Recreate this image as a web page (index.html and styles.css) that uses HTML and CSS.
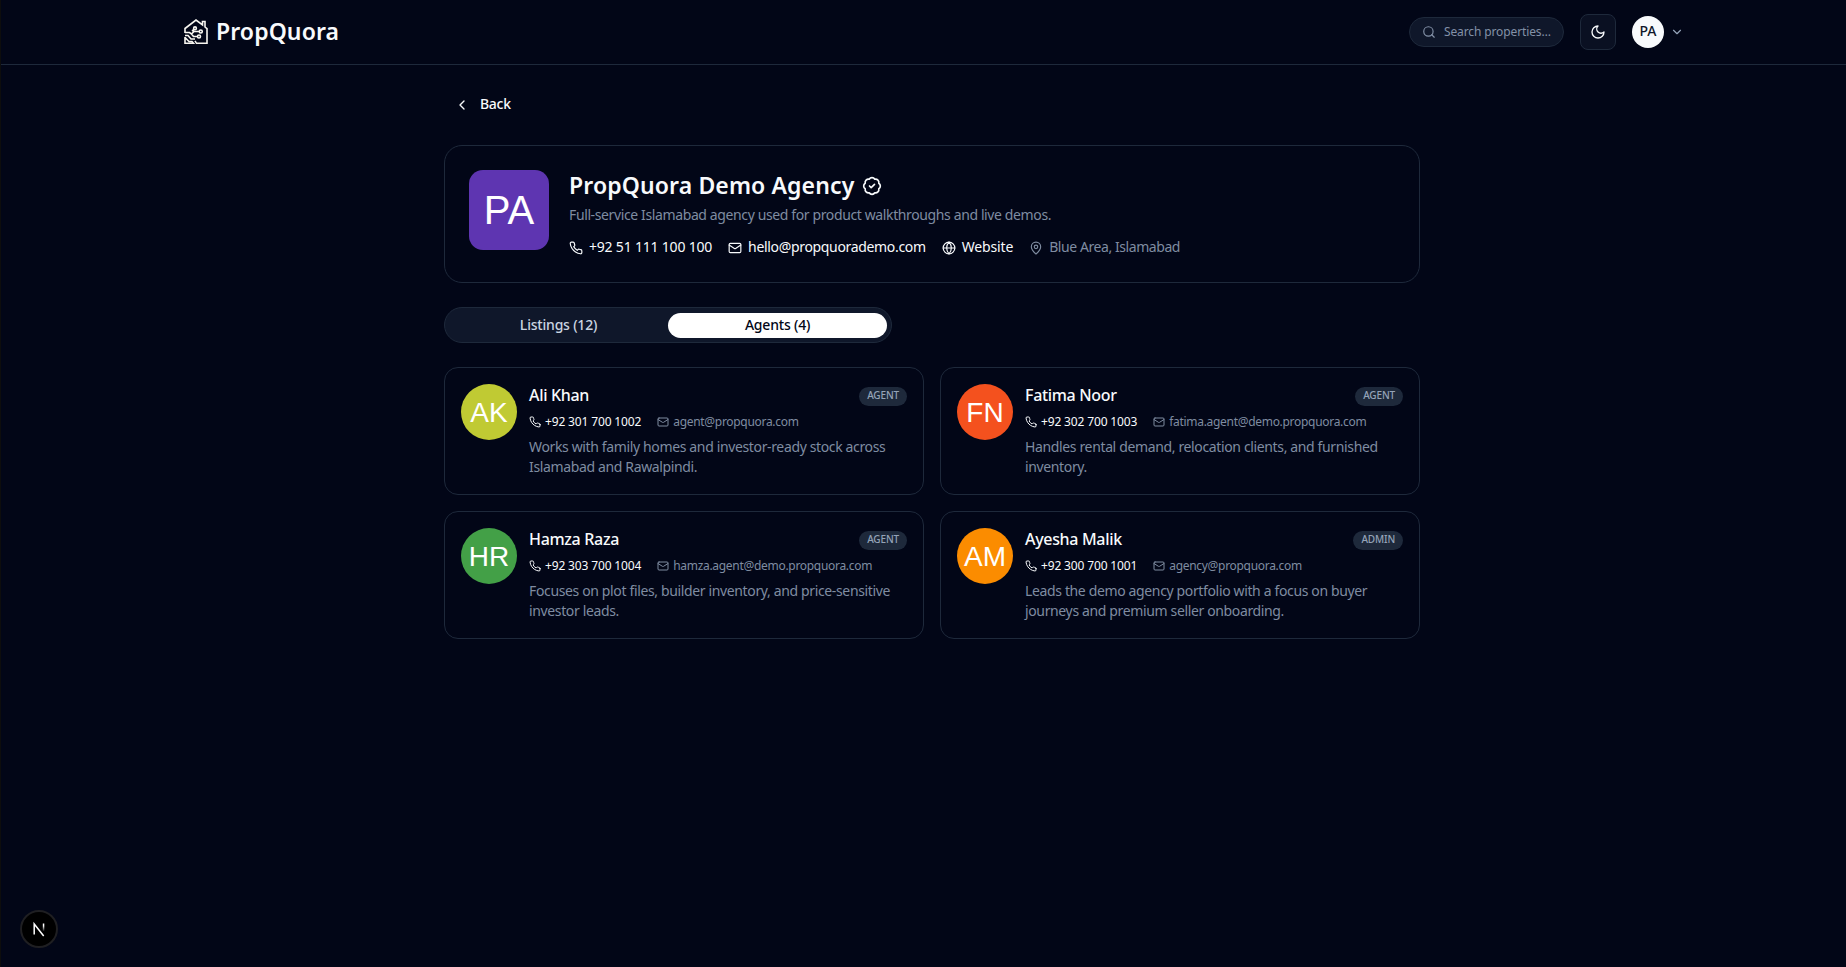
FILE: index.html
```html
<!DOCTYPE html>
<html lang="en">
<head>
    <meta charset="UTF-8">
    <meta name="viewport" content="width=device-width, initial-scale=1.0">
    <title>PropQuora Demo Agency</title>
    <link rel="stylesheet" href="styles.css">
</head>
<body>
    <!-- Icon set -->
    <svg class="sprite">
        <symbol id="phone" viewBox="0 0 24 24"><path d="M22 16.92v3a2 2 0 0 1-2.18 2 19.79 19.79 0 0 1-8.63-3.07 19.5 19.5 0 0 1-6-6 19.79 19.79 0 0 1-3.07-8.67A2 2 0 0 1 4.11 2h3a2 2 0 0 1 2 1.72 12.84 12.84 0 0 0 .7 2.81 2 2 0 0 1-.45 2.11L8.09 9.91a16 16 0 0 0 6 6l1.27-1.27a2 2 0 0 1 2.11-.45 12.84 12.84 0 0 0 2.81.7A2 2 0 0 1 22 16.92z"/></symbol>
        <symbol id="mail" viewBox="0 0 24 24"><rect x="2" y="4" width="20" height="16" rx="2"/><path d="m22 7-8.97 5.7a1.94 1.94 0 0 1-2.06 0L2 7"/></symbol>
        <symbol id="globe" viewBox="0 0 24 24"><circle cx="12" cy="12" r="10"/><path d="M12 2a14.5 14.5 0 0 0 0 20 14.5 14.5 0 0 0 0-20M2 12h20"/></symbol>
        <symbol id="pin" viewBox="0 0 24 24"><path d="M20 10c0 4.993-5.539 10.193-7.399 11.799a1 1 0 0 1-1.202 0C9.539 20.193 4 14.993 4 10a8 8 0 0 1 16 0"/><circle cx="12" cy="10" r="3"/></symbol>
    </svg>

    <header class="header">
        <div class="header-inner">
            <a class="logo">
                <svg class="logo-icon" viewBox="0 0 24 26">
                    <path d="M1 14V9.500L12 1l6.500 5V2.500h2.500V8l2 1.700V24.300H12.500l-1.500-2.500"/>
                    <path d="M1 13.500h4.500l2 1.500 2.500-2.500h5M7.500 15l2 2.500h4M1 16.500h3l3 3.500h4M1 18v6.300h8.500L8 22.500H5L1 18.500M8 12l2-1.500"/>
                    <circle cx="11" cy="9.300" r="1.400"/>
                    <circle cx="16.800" cy="12.500" r="1.500"/>
                    <circle cx="15" cy="17.500" r="1.500"/>
                </svg>
                <span class="logo-text">PropQuora</span>
            </a>
            <div class="header-actions">
                <div class="search">
                    <svg class="icon" viewBox="0 0 24 24"><circle cx="11" cy="11" r="8"/><path d="m21 21-4.300-4.300"/></svg>
                    <span>Search properties…</span>
                </div>
                <button class="theme-btn">
                    <svg class="icon" viewBox="0 0 24 24"><path d="M12 3a6 6 0 0 0 9 9 9 9 0 1 1-9-9Z"/></svg>
                </button>
                <div class="user">
                    <span class="user-avatar">PA</span>
                    <svg class="icon" viewBox="0 0 24 24"><path d="m6 9 6 6 6-6"/></svg>
                </div>
            </div>
        </div>
    </header>

    <main class="container">
        <a class="back">
            <svg class="icon" viewBox="0 0 24 24"><path d="m15 18-6-6 6-6"/></svg>
            <span>Back</span>
        </a>

        <section class="agency">
            <div class="agency-logo">PA</div>
            <div class="agency-info">
                <h1><span>PropQuora Demo Agency</span>
                    <svg class="icon" viewBox="0 0 24 24"><path d="M3.850 8.620a4 4 0 0 1 4.780-4.770 4 4 0 0 1 6.740 0 4 4 0 0 1 4.780 4.780 4 4 0 0 1 0 6.740 4 4 0 0 1-4.770 4.780 4 4 0 0 1-6.750 0 4 4 0 0 1-4.780-4.770 4 4 0 0 1 0-6.760Z"/><path d="m9 12 2 2 4-4"/></svg>
                </h1>
                <p class="agency-desc">Full-service Islamabad agency used for product walkthroughs and live demos.</p>
                <div class="agency-contact">
                    <a class="tel"><svg class="icon"><use href="#phone"/></svg><span>+92 51 111 100 100</span></a>
                    <a class="email"><svg class="icon"><use href="#mail"/></svg><span>hello@propquorademo.com</span></a>
                    <a class="site"><svg class="icon"><use href="#globe"/></svg><span>Website</span></a>
                    <span class="place"><svg class="icon"><use href="#pin"/></svg><span>Blue Area, Islamabad</span></span>
                </div>
            </div>
        </section>

        <div class="tabs">
            <button class="tab">Listings (12)</button>
            <button class="tab active">Agents (4)</button>
        </div>

        <div class="agents">
            <article class="agent">
                <div class="avatar lime">AK</div>
                <div class="agent-info">
                    <div class="agent-top"><h2>Ali Khan</h2><span class="badge">AGENT</span></div>
                    <div class="agent-contact">
                        <a class="tel"><svg class="icon"><use href="#phone"/></svg><span>+92 301 700 1002</span></a>
                        <a class="email"><svg class="icon"><use href="#mail"/></svg><span>agent@propquora.com</span></a>
                    </div>
                    <p>Works with family homes and investor-ready stock across<br>Islamabad and Rawalpindi.</p>
                </div>
            </article>
            <article class="agent">
                <div class="avatar red">FN</div>
                <div class="agent-info">
                    <div class="agent-top"><h2>Fatima Noor</h2><span class="badge">AGENT</span></div>
                    <div class="agent-contact">
                        <a class="tel"><svg class="icon"><use href="#phone"/></svg><span>+92 302 700 1003</span></a>
                        <a class="email"><svg class="icon"><use href="#mail"/></svg><span>fatima.agent@demo.propquora.com</span></a>
                    </div>
                    <p>Handles rental demand, relocation clients, and furnished<br>inventory.</p>
                </div>
            </article>
            <article class="agent">
                <div class="avatar green">HR</div>
                <div class="agent-info">
                    <div class="agent-top"><h2>Hamza Raza</h2><span class="badge">AGENT</span></div>
                    <div class="agent-contact">
                        <a class="tel"><svg class="icon"><use href="#phone"/></svg><span>+92 303 700 1004</span></a>
                        <a class="email"><svg class="icon"><use href="#mail"/></svg><span>hamza.agent@demo.propquora.com</span></a>
                    </div>
                    <p>Focuses on plot files, builder inventory, and price-sensitive<br>investor leads.</p>
                </div>
            </article>
            <article class="agent">
                <div class="avatar orange">AM</div>
                <div class="agent-info">
                    <div class="agent-top"><h2>Ayesha Malik</h2><span class="badge">ADMIN</span></div>
                    <div class="agent-contact">
                        <a class="tel"><svg class="icon"><use href="#phone"/></svg><span>+92 300 700 1001</span></a>
                        <a class="email"><svg class="icon"><use href="#mail"/></svg><span>agency@propquora.com</span></a>
                    </div>
                    <p>Leads the demo agency portfolio with a focus on buyer<br>journeys and premium seller onboarding.</p>
                </div>
            </article>
        </div>
    </main>

    <!-- Dev tools button -->
    <div class="dev-badge">
        <svg viewBox="0 0 16 16">
            <defs>
                <linearGradient id="fade" x1="0" y1="0" x2="0" y2="1"><stop offset="0.300" stop-color="#fff"/><stop offset="1" stop-color="#fff" stop-opacity="0"/></linearGradient>
            </defs>
            <path d="M3.200 13.500V3l9.500 12" stroke="#fff"/>
            <rect x="11.800" y="2.500" width="1.500" height="8" fill="url(#fade)"/>
        </svg>
    </div>
</body>
</html>
```
FILE: styles.css
```css
* {
    box-sizing: border-box;
}
body {
    margin: 0;
    height: 967px;
    overflow: hidden;
    background-color: #020617;
    border-left: 1px solid #0d0d0d;
    color: #f8fafc;
    font-family: "Noto Sans", "Open Sans", sans-serif;
    font-size: 14px;
    line-height: 20px;
}
h1, h2, p {
    margin: 0;
}
button {
    font-family: inherit;
    border: none;
    padding: 0;
}
.sprite {
    position: absolute;
    width: 0;
    height: 0;
}
.icon {
    flex: none;
    width: 16px;
    height: 16px;
    fill: none;
    stroke: currentColor;
    stroke-width: 2;
    stroke-linecap: round;
    stroke-linejoin: round;
}

/* Header */
.header {
    height: 65px;
    padding-left: 17px;
    border-bottom: 1px solid #1e293b;
}
.header-inner {
    width: 1504px;
    height: 64px;
    margin: 0 auto;
    display: flex;
    justify-content: space-between;
    align-items: center;
}
.logo {
    display: flex;
    align-items: center;
    gap: 8px;
    padding-left: 4px;
}
.logo-icon {
    width: 24px;
    height: 26px;
    fill: none;
    stroke: #f8f6f0;
    stroke-width: 1.6;
}
.logo-text {
    margin-top: -2px;
    font-size: 23px;
    font-weight: 600;
    line-height: 32px;
    letter-spacing: 0.1px;
}
.header-actions {
    display: flex;
    align-items: center;
    gap: 16px;
}
.search {
    display: flex;
    align-items: center;
    gap: 8px;
    width: 155px;
    height: 30px;
    padding: 0 12px;
    border: 1px solid #1e293b;
    border-radius: 15px;
    background-color: #0f172a;
    color: #8391a7;
    font-size: 12px;
    letter-spacing: -0.12px;
    white-space: nowrap;
}
.search .icon {
    width: 14px;
    height: 14px;
}
.theme-btn {
    display: flex;
    align-items: center;
    justify-content: center;
    width: 36px;
    height: 36px;
    border: 1px solid #1e293b;
    border-radius: 8px;
    background-color: #0a1022;
    color: #f8fafc;
}
.user {
    display: flex;
    align-items: center;
    gap: 6px;
    color: #94a3b8;
}
.user .icon {
    width: 14px;
    height: 14px;
}
.user-avatar {
    width: 32px;
    height: 32px;
    border-radius: 50%;
    background-color: #f8fafc;
    color: #0f172a;
    font-size: 14px;
    font-weight: 500;
    line-height: 30px;
    text-align: center;
}

/* Page */
.container {
    width: 976px;
    margin-left: 443px;
    padding-top: 21px;
}
.back {
    display: flex;
    align-items: center;
    gap: 10px;
    height: 36px;
    padding-left: 10px;
    font-weight: 500;
    letter-spacing: -0.3px;
}
.back .icon {
    margin-top: 2px;
}

/* Agency card */
.agency {
    display: flex;
    gap: 20px;
    height: 138px;
    margin-top: 23px;
    padding: 24px;
    border: 1px solid #1e293b;
    border-radius: 18px;
}
.agency-logo {
    width: 80px;
    height: 80px;
    border-radius: 14px;
    background-color: #5e35b1;
    color: #fff;
    font-family: "Liberation Sans", Arial, sans-serif;
    font-size: 40px;
    line-height: 80px;
    text-align: center;
}
.agency-info h1 {
    display: flex;
    align-items: center;
    gap: 8px;
    height: 32px;
    font-size: 23px;
    font-weight: 600;
    letter-spacing: 0.12px;
}
.agency-info h1 span {
    margin-top: -2px;
}
.agency-info h1 .icon {
    width: 20px;
    height: 20px;
}
.agency-desc {
    margin-top: 3px;
    color: #7f8ca1;
    letter-spacing: -0.38px;
}
.agency-contact {
    display: flex;
    gap: 16px;
    margin-top: 12px;
}
.agency-contact > * {
    display: flex;
    align-items: center;
    gap: 6px;
}
.agency-contact .icon {
    width: 14px;
    height: 14px;
    margin-top: 1px;
}
.agency-contact .tel {
    letter-spacing: -0.2px;
}
.agency-contact .email {
    letter-spacing: -0.33px;
}
.agency-contact .site {
    letter-spacing: -0.15px;
}
.agency-contact .place {
    color: #7f8ca1;
    letter-spacing: -0.43px;
}

/* Tabs */
.tabs {
    display: flex;
    width: 448px;
    height: 36px;
    margin-top: 24px;
    padding: 5px 4px;
    border: 1px solid #1e293b;
    border-radius: 18px;
    background-color: #0f172a;
}
.tab {
    flex: 1;
    height: 25px;
    padding-bottom: 2px;
    border-radius: 13px;
    background: none;
    color: #cbd5e1;
    font-size: 14px;
    font-weight: 500;
    line-height: 20px;
    letter-spacing: -0.2px;
}
.tab.active {
    background-color: #fff;
    color: #020617;
}

/* Agents */
.agents {
    display: grid;
    grid-template-columns: 1fr 1fr;
    gap: 16px;
    margin-top: 24px;
}
.agent {
    display: flex;
    gap: 12px;
    height: 128px;
    padding: 16px;
    border: 1px solid #1e293b;
    border-radius: 14px;
}
.avatar {
    flex: none;
    width: 56px;
    height: 56px;
    border-radius: 50%;
    color: #fff;
    font-family: "Liberation Sans", Arial, sans-serif;
    font-size: 28px;
    line-height: 58px;
    text-align: center;
}
.lime {
    background-color: #c0ca33;
}
.red {
    background-color: #f4511e;
}
.green {
    background-color: #43a047;
}
.orange {
    background-color: #fb8c00;
}
.agent-info {
    flex: 1;
}
.agent-top {
    display: flex;
    justify-content: space-between;
    align-items: center;
    height: 24px;
}
.agent h2 {
    margin-top: -2px;
    font-size: 16px;
    font-weight: 500;
    letter-spacing: -0.32px;
}
.badge {
    height: 19px;
    padding: 0 8px;
    border-radius: 10px;
    background-color: #1e293b;
    color: #94a3b8;
    font-size: 10px;
    font-weight: 500;
    line-height: 17px;
    letter-spacing: -0.15px;
}
.agent-contact {
    display: flex;
    gap: 16px;
    height: 16px;
    margin-top: 6px;
    font-size: 12px;
    line-height: 16px;
}
.agent-contact > * {
    display: flex;
    align-items: center;
    gap: 4px;
}
.agent-contact .icon {
    width: 12px;
    height: 12px;
}
.agent-contact .tel {
    letter-spacing: -0.15px;
}
.agent-contact .email {
    color: #7f8ca1;
    letter-spacing: -0.3px;
}
.agent p {
    margin-top: 7px;
    color: #7f8ca1;
    letter-spacing: -0.36px;
    white-space: nowrap;
}

.dev-badge {
    position: fixed;
    left: 20px;
    bottom: 19px;
    display: flex;
    align-items: center;
    justify-content: center;
    width: 38px;
    height: 38px;
    border: 2px solid #1f1f22;
    border-radius: 50%;
    background-color: #000;
}
.dev-badge svg {
    width: 16px;
    height: 16px;
    fill: none;
    stroke-width: 1.5;
}
```
